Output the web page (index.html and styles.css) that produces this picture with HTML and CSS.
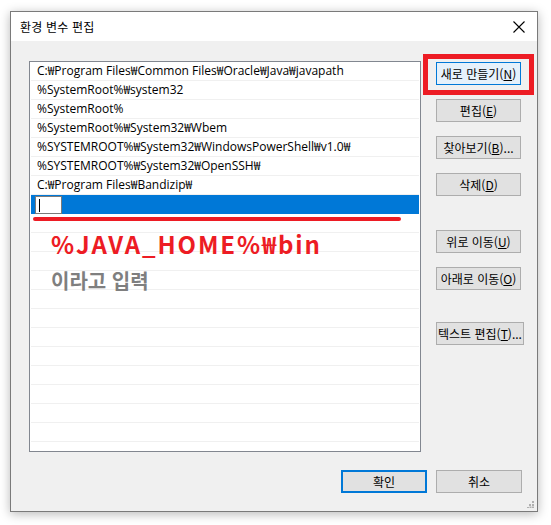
FILE: index.html
```html
<!DOCTYPE html>
<html lang="ko">
<head>
<meta charset="utf-8">
<link rel="stylesheet" href="styles.css">
</head>
<body>
<div class="window">
  <div class="titlebar">
    <span class="title">환경 변수 편집</span>
    <svg class="close" width="12" height="12" viewBox="0 0 12 12"><path d="M0.5 0.5 L11.5 11.5 M11.5 0.5 L0.5 11.5" stroke="#000" stroke-width="1.1" fill="none"/></svg>
  </div>
  <div class="content">
    <div class="main">
      <div class="list">
        <div class="row">C:₩Program Files₩Common Files₩Oracle₩Java₩javapath</div>
        <div class="row">%SystemRoot%₩system32</div>
        <div class="row">%SystemRoot%</div>
        <div class="row">%SystemRoot%₩System32₩Wbem</div>
        <div class="row">%SYSTEMROOT%₩System32₩WindowsPowerShell₩v1.0₩</div>
        <div class="row">%SYSTEMROOT%₩System32₩OpenSSH₩</div>
        <div class="row">C:₩Program Files₩Bandizip₩</div>
        <div class="row selected"><span class="editbox"><span class="caret"></span></span></div>
        <div class="row"></div>
        <div class="row"></div>
        <div class="row"></div>
        <div class="row"></div>
        <div class="row"></div>
        <div class="row"></div>
        <div class="row"></div>
        <div class="row"></div>
        <div class="row"></div>
        <div class="row"></div>
        <div class="row"></div>
        <div class="row"></div>
        <div class="row"></div>
        <div class="annot">
          <div class="underline"></div>
          <div class="big">%JAVA_HOME%₩bin</div>
          <div class="sub">이라고 입력</div>
        </div>
      </div>
      <div class="buttons">
        <div class="btn primary highlight">새로 만들기(<u>N</u>)<span class="redbox"></span></div>
        <div class="btn">편집(<u>E</u>)</div>
        <div class="btn">찾아보기(<u>B</u>)...</div>
        <div class="btn">삭제(<u>D</u>)</div>
        <div class="btn gap-top">위로 이동(<u>U</u>)</div>
        <div class="btn">아래로 이동(<u>O</u>)</div>
        <div class="btn wide gap-top2">텍스트 편집(<u>T</u>)...</div>
      </div>
    </div>
    <div class="footer">
      <div class="btn ok">확인</div>
      <div class="btn">취소</div>
    </div>
    <svg class="grip" width="7" height="7" viewBox="0 0 7 7"><g fill="#b0b0b0"><rect x="5" y="0" width="2" height="2"/><rect x="2" y="3" width="2" height="2"/><rect x="5" y="3" width="2" height="2"/><rect x="0" y="6" width="2" height="1"/><rect x="2.5" y="5.5" width="2" height="1.5"/><rect x="5" y="5.5" width="2" height="1.5"/></g></svg>
  </div>
</div>
</body>
</html>
```

FILE: styles.css
```css
* { box-sizing: border-box; }
html, body { margin: 0; padding: 0; background: #ffffff; }
body {
  width: 551px;
  height: 525px;
  overflow: hidden;
  padding: 11px 0 0 10px;
  font-family: "Noto Sans CJK KR", "Noto Sans", sans-serif;
  font-size: 12px;
  color: #000;
}
.window {
  width: 528px;
  height: 501px;
  border: 1px solid #7a7a7a;
  background: #f0f0f0;
  box-shadow: 0 2px 10px rgba(0,0,0,0.28);
  display: flex;
  flex-direction: column;
}
.titlebar {
  height: 29px;
  background: #fff;
  display: flex;
  align-items: center;
  justify-content: space-between;
  padding: 0 12px 0 9px;
  flex-shrink: 0;
}
.title { font-size: 12px; letter-spacing: 0.2px; }
.close { display: block; }
.content {
  position: relative;
  flex: 1;
  display: flex;
  flex-direction: column;
}
.main {
  display: flex;
  padding: 20px 0 0 18px;
  gap: 15px;
}
.list {
  position: relative;
  width: 392px;
  height: 391px;
  background: #fff;
  border: 1px solid #828790;
  overflow: hidden;
  padding: 0 1px;
}
.row {
  height: 19px;
  border-bottom: 1px solid #f0f0f0;
  padding-left: 6px;
  font-family: "Open Sans", "Noto Sans CJK KR", sans-serif;
  font-size: 12px;
  line-height: 18px;
  white-space: nowrap;
  color: #000;
}
.row.selected {
  background: #0078d7;
  border-bottom-color: #0078d7;
  padding-left: 4px;
  padding-top: 1px;
}
.editbox {
  display: block;
  width: 27px;
  height: 18px;
  background: #fff;
  border: 1px solid #7a7a7a;
  position: relative;
}
.caret {
  position: absolute;
  left: 3px;
  top: 2px;
  width: 1px;
  height: 13px;
  background: #000;
}
.annot {
  position: absolute;
  left: 0;
  top: 155px;
  width: 100%;
}
.underline {
  margin-left: 3px;
  width: 368px;
  height: 4px;
  border-radius: 2px;
  background: #ed1c24;
}
.big {
  margin: 8px 0 0 21px;
  font-family: "Noto Sans CJK KR", sans-serif;
  font-weight: 700;
  font-size: 24px;
  line-height: 30px;
  letter-spacing: 1.9px;
  color: #ed1c24;
}
.sub {
  margin: 8px 0 0 21px;
  font-family: "Noto Sans CJK KR", sans-serif;
  font-weight: 700;
  font-size: 20px;
  line-height: 28px;
  color: #7f7f7f;
}
.buttons {
  display: flex;
  flex-direction: column;
  padding-top: 1px;
  gap: 14px;
  width: 88px;
}
.btn {
  position: relative;
  width: 85px;
  height: 23px;
  background: #e1e1e1;
  border: 1px solid #adadad;
  display: flex;
  align-items: center;
  justify-content: center;
  font-size: 12px;
  white-space: nowrap;
  color: #000;
}
.btn u { text-decoration: underline; text-underline-offset: 1px; }
.btn.primary {
  background: #e5f1fb;
  border-color: #0078d7;
}
.btn.gap-top { margin-top: 20px; }
.btn.gap-top2 { margin-top: 18px; }
.btn.wide { width: 88px; }
.redbox {
  position: absolute;
  left: -14px;
  top: -9px;
  width: 111px;
  height: 41px;
  border: 5px solid #ed1c24;
  pointer-events: none;
}
.footer {
  display: flex;
  justify-content: flex-end;
  gap: 9px;
  padding: 18px 15px 0 0;
}
.btn.ok {
  width: 86px;
  border: 2px solid #0078d7;
}
.footer .btn { width: 86px; }
.grip {
  position: absolute;
  right: 3px;
  bottom: 3px;
}
```
